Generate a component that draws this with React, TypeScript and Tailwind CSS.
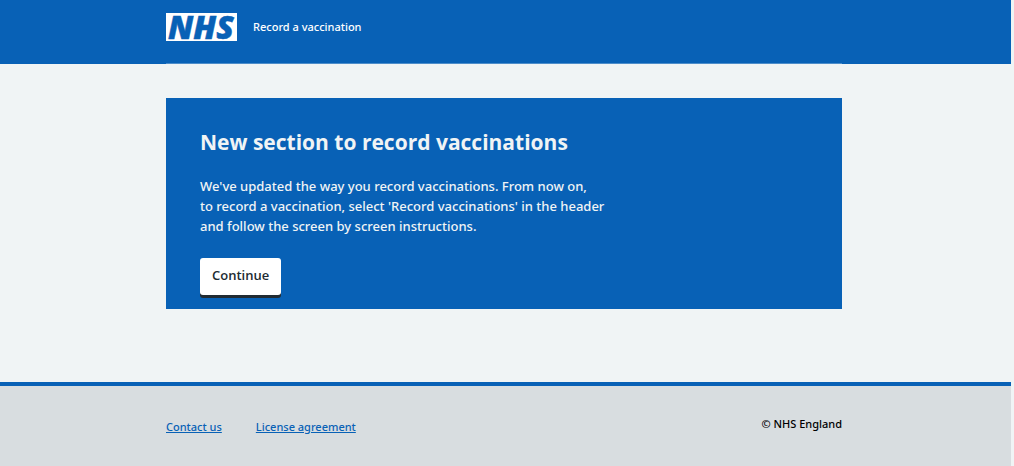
import type { ReactNode } from "react";

function Container({ children, className = "" }: { children: ReactNode; className?: string }) {
  return (
    <div className="px-4 sm:pl-0 sm:pr-[3px]">
      <div className={`mx-auto max-w-[676px] ${className}`}>{children}</div>
    </div>
  );
}

function Logo() {
  return (
    <svg viewBox="0 0 71 28" className="h-7 w-[71px] overflow-visible" role="img" aria-label="NHS">
      <rect width="71" height="28" fill="#ffffff" />
      <text
        x="2"
        y="25.5"
        fill="#0861b6"
        stroke="#0861b6"
        strokeWidth="0.5"
        fontFamily="'Open Sans', 'Noto Sans', sans-serif"
        fontSize="32"
        fontWeight="800"
        fontStyle="italic"
      >
        NHS
      </text>
    </svg>
  );
}

export default function App() {
  return (
    <div className="flex min-h-screen flex-col bg-[#f0f4f5] pr-[3px] font-['Noto_Sans',sans-serif] font-medium text-[#212b32]">
      <header className="bg-[#0861b6]">
        <Container className="border-b border-[#4d8dca] pt-[13px] pb-[22px]">
          <a href="#" className="flex items-center gap-4 text-[11px] leading-4 text-white">
            <Logo />
            <span>Record a vaccination</span>
          </a>
        </Container>
      </header>

      <main className="grow pt-[34px] pb-[73px]">
        <Container>
          <section className="bg-[#0861b6] px-[34px] pt-7 pb-[14px] text-[#f0f4f5]">
            <h1 className="font-['Open_Sans',sans-serif] text-[21px] leading-8 font-bold">
              New section to record vaccinations
            </h1>
            <p className="mt-[18px] max-w-[440px] text-[13px] leading-5">
              We've updated the way you record vaccinations. From now on,
              <br className="hidden sm:inline" /> to record a vaccination, select 'Record vaccinations' in the header
              <br className="hidden sm:inline" /> and follow the screen by screen instructions.
            </p>
            <button
              type="button"
              className="mt-[22px] block h-[37px] rounded-[3px] bg-white px-3 pb-[3px] font-['Open_Sans',sans-serif] text-[13px] leading-5 font-semibold text-[#212b32] shadow-[0_3px_0_#212b32]"
            >
              Continue
            </button>
          </section>
        </Container>
      </main>

      <footer className="border-t-4 border-[#0861b6] bg-[#d8dde0] pt-[30px] pb-[31px]">
        <Container className="flex flex-wrap items-start justify-between gap-4 text-[11px] leading-4">
          <ul className="flex gap-[34px] pt-[3px]">
            <li>
              <a href="#" className="text-[#0861b6] underline">Contact us</a>
            </li>
            <li>
              <a href="#" className="text-[#0861b6] underline">License agreement</a>
            </li>
          </ul>
          <p className="text-black">© NHS England</p>
        </Container>
      </footer>
    </div>
  );
}
